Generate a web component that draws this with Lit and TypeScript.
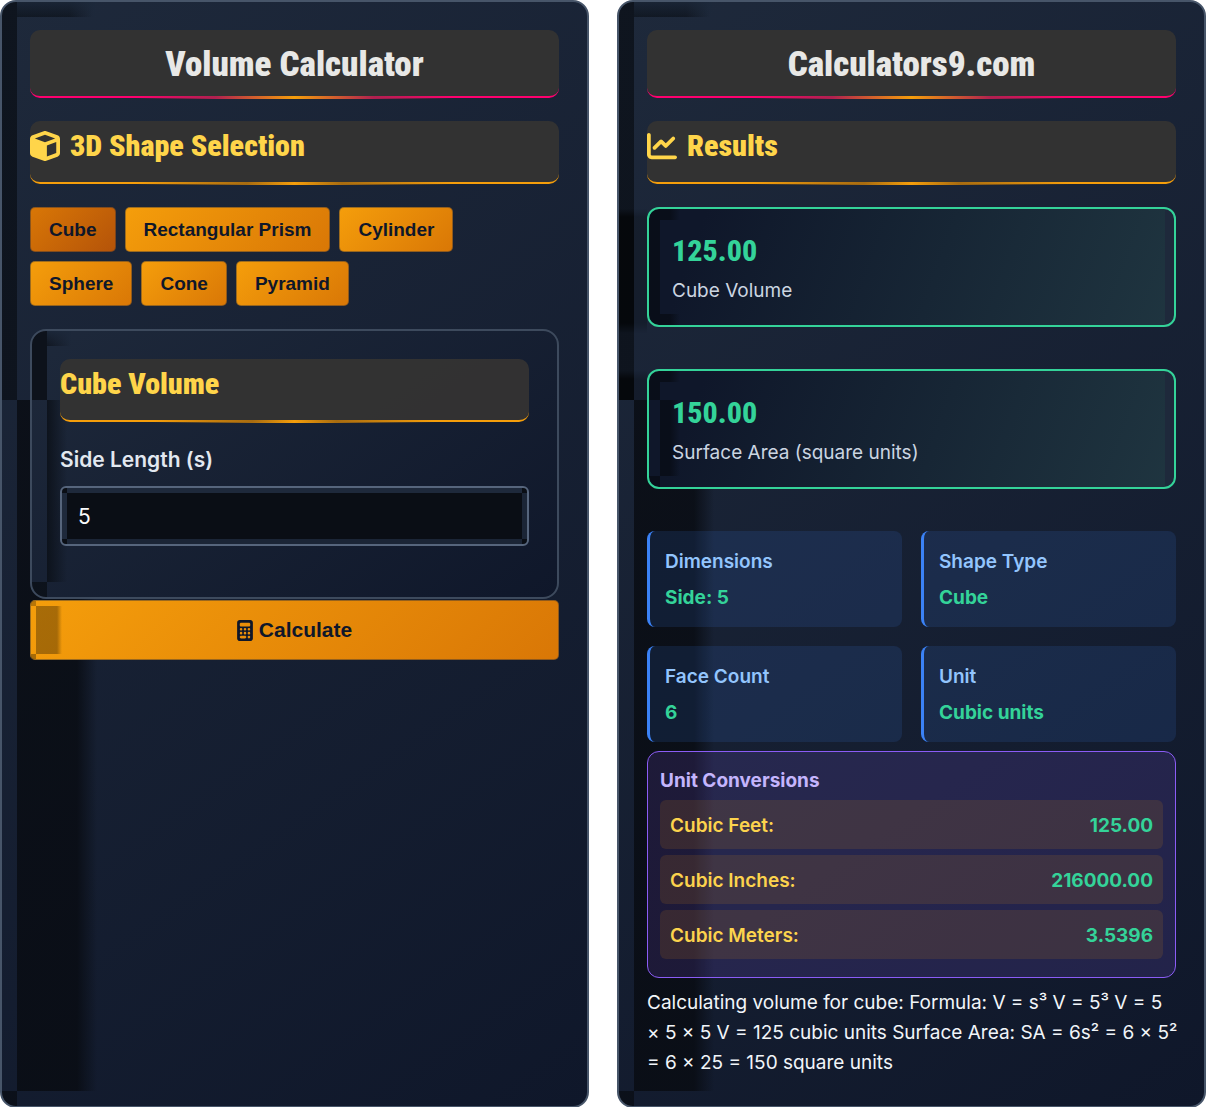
import { LitElement, html, css, svg } from "lit";
import { customElement, state } from "lit/decorators.js";
import { classMap } from "lit/directives/class-map.js";

const SHAPES = ["Cube", "Rectangular Prism", "Cylinder", "Sphere", "Cone", "Pyramid"];

const cubeIcon = svg`<path d="M234.5 5.7c13.9-5 29.1-5 43.1 0l192 68.6C495 83.4 512 107.5 512 134.6V377.4c0 27-17 51.2-42.5 60.3l-192 68.6c-13.9 5-29.1 5-43.1 0l-192-68.6C17 428.6 0 404.5 0 377.4V134.6c0-27 17-51.2 42.5-60.3l192-68.6zM256 66L82.3 128 256 190l173.7-62L256 66zm32 368.6l160-57.1v-188L288 246.6v188z"/>`;
const chartIcon = svg`<path d="M64 64c0-17.7-14.3-32-32-32S0 46.3 0 64V400c0 44.2 35.8 80 80 80H480c17.7 0 32-14.3 32-32s-14.3-32-32-32H80c-8.8 0-16-7.2-16-16V64zm406.6 86.6c12.5-12.5 12.5-32.8 0-45.3s-32.8-12.5-45.3 0L320 210.7l-57.4-57.4c-12.5-12.5-32.8-12.5-45.3 0l-112 112c-12.5 12.5-12.5 32.8 0 45.3s32.8 12.5 45.3 0L240 221.3l57.4 57.4c12.5 12.5 32.8 12.5 45.3 0l128-128z"/>`;
const calcIcon = svg`<path d="M64 0C28.7 0 0 28.7 0 64V448c0 35.3 28.7 64 64 64H320c35.3 0 64-28.7 64-64V64c0-35.3-28.7-64-64-64H64zM96 64H288c17.7 0 32 14.3 32 32v32c0 17.7-14.3 32-32 32H96c-17.7 0-32-14.3-32-32V96c0-17.7 14.3-32 32-32zm32 160a32 32 0 1 1 -64 0 32 32 0 1 1 64 0zM96 352a32 32 0 1 1 0-64 32 32 0 1 1 0 64zM64 416c0-17.7 14.3-32 32-32h96c17.7 0 32 14.3 32 32s-14.3 32-32 32H96c-17.7 0-32-14.3-32-32zM192 256a32 32 0 1 1 0-64 32 32 0 1 1 0 64zm32 64a32 32 0 1 1 -64 0 32 32 0 1 1 64 0zm64-64a32 32 0 1 1 0-64 32 32 0 1 1 0 64zm32 64a32 32 0 1 1 -64 0 32 32 0 1 1 64 0zM288 448a32 32 0 1 1 0-64 32 32 0 1 1 0 64z"/>`;

@customElement("app-root")
export class AppRoot extends LitElement {
  @state() private shape = "Cube";
  @state() private entry = "5";
  @state() private side = 5;

  static styles = css`
    :host {
      display: block;
      background: #fff;
      color: #e2e8f0;
      font: 400 19px/30px Inter, "Liberation Sans", sans-serif;
    }
    *,
    *::before,
    *::after {
      box-sizing: border-box;
    }
    h1, h2, h3, p, dl, dd, dt {
      margin: 0;
    }
    .page {
      display: grid;
      grid-template-columns: 1fr 1fr;
      gap: 28px;
    }
    .panel {
      min-width: 0;
      padding: 28px;
      border: 2px solid #475569;
      border-radius: 16px;
      /* broken shading down the left edge, switching sides 400px down */
      background:
        linear-gradient(90deg, #0b1018cc, #0b1018cc) 0 0 / 15px 398px no-repeat,
        linear-gradient(180deg, #1c283acc, #1c283a1a) 15px 0 / 78px 15px no-repeat,
        linear-gradient(90deg, #0b1018bb, #0b1018bb 52px, #0b101800 76px) 15px 0 / 78px 15px no-repeat,
        linear-gradient(90deg, #080b11cc, #080b11cc 60px, #080b1100 80px) 15px 398px / 80px calc(100% - 413px) no-repeat,
        linear-gradient(#080b11b3, #080b11b3) 0 100% / 15px 15px no-repeat,
        linear-gradient(145deg, #1e293b, #0f172a) border-box;
    }
    .title,
    .subtitle {
      position: relative;
      font-family: "Roboto Condensed", Roboto, sans-serif;
      font-weight: 900;
      background: rgba(52, 51, 50, 0.94);
      border-radius: 10px;
      border-bottom: 2px solid #f59e0b;
      margin-bottom: 23px;
    }
    .title {
      padding: 13px 0 10px;
      border-bottom-color: #ff006e;
      color: #e8e8e6;
      font-size: 35px;
      line-height: 43px;
      text-align: center;
    }
    .subtitle {
      display: flex;
      align-items: center;
      gap: 10px;
      padding: 5px 0 16px;
      color: #ffd54a;
      font-size: 30px;
      line-height: 40px;
    }
    .title::after,
    .subtitle::after {
      content: "";
      position: absolute;
      left: 20%;
      right: 20%;
      bottom: -3px;
      height: 3px;
      background: linear-gradient(90deg, #a86c1000, #a86c10 35%, #f59e0b 50%, #a86c10 65%, #a86c1000);
    }
    .title::after {
      background: linear-gradient(90deg, #b0204f00, #b0204f 25%, #f59e0b 50%, #b0204f 75%, #b0204f00);
    }
    .subtitle svg {
      width: 30px;
      height: 30px;
      fill: currentColor;
    }
    .shapes {
      display: flex;
      flex-wrap: wrap;
      gap: 9px;
      margin-bottom: 23px;
    }
    button {
      border: 1px solid #1e293b66;
      border-radius: 5px;
      color: #0f172a;
      background: linear-gradient(135deg, #f59e0b, #d97706) border-box;
      font: 700 19px/22px "Liberation Sans", sans-serif;
      cursor: pointer;
    }
    .shape {
      padding: 11px 18px 10px;
    }
    .shape.active {
      background: linear-gradient(135deg, #d97706, #b45309) border-box;
    }
    .form {
      padding: 28px;
      border: 2px solid #3d4a5d;
      border-radius: 16px;
      background:
        linear-gradient(#0d121b, #0d121b) 0 0 / 15px 69px no-repeat,
        linear-gradient(180deg, #1c283aee, #1c283a1a) 15px 0 / 24px 15px no-repeat,
        linear-gradient(90deg, #0d121bdd, #0d121b00) 15px 0 / 24px 15px no-repeat,
        linear-gradient(90deg, #0b1018dd, #0b101800) 15px 69px / 20px calc(100% - 84px) no-repeat,
        linear-gradient(#0b1018dd, #0b1018dd) 0 100% / 15px 15px no-repeat,
        linear-gradient(145deg, #1e293b, #0f172a) border-box;
    }
    .label {
      display: block;
      margin-bottom: 11px;
      font-size: 21px;
      line-height: 30px;
      font-weight: 600;
    }
    .field {
      display: block;
      width: 100%;
      height: 60px;
      margin-bottom: 23px;
      padding: 0 16px;
      border: 2px solid #56657c;
      border-radius: 6px;
      color: #f8fafc;
      font: 400 21px/30px Inter, sans-serif;
      background:
        linear-gradient(#1e293b, #1e293b) 50% 0 / calc(100% - 10px) 5px no-repeat,
        linear-gradient(#1b2536, #1b2536) 50% 100% / calc(100% - 10px) 5px no-repeat,
        linear-gradient(#1e293b, #1e293b) 0 50% / 5px calc(100% - 10px) no-repeat,
        linear-gradient(#1b2536, #1b2536) 100% 50% / 5px calc(100% - 10px) no-repeat,
        #0a0e15;
    }
    .calculate {
      display: flex;
      width: 100%;
      align-items: center;
      justify-content: center;
      gap: 6px;
      margin-top: 1px;
      padding: 17px;
      font-size: 21px;
      line-height: 24px;
      background:
        linear-gradient(90deg, #00000050, #00000050 21px, #00000000 26px) 5px 5px / 26px calc(100% - 10px) no-repeat,
        linear-gradient(#00000040, #00000040) 0 0 / 5px 5px no-repeat,
        linear-gradient(#00000050, #00000050) 0 100% / 5px 5px no-repeat,
        linear-gradient(135deg, #f59e0b, #d97706) border-box;
    }
    .calculate svg {
      width: 16px;
      height: 21px;
      fill: currentColor;
    }
    .result {
      position: relative;
      margin-bottom: 42px;
      padding: 22px 23px 19px;
      border: 2px solid #34d399;
      border-radius: 12px;
      background:
        linear-gradient(#05080e99, #05080e99) 0 0 / 11px 100% no-repeat,
        linear-gradient(90deg, #05080e99, #05080e99 10px, #05080e00 20px) 11px 0 / 20px 11px no-repeat,
        linear-gradient(90deg, #05080e99, #05080e99 10px, #05080e00 20px) 11px 100% / 20px 11px no-repeat,
        linear-gradient(#1e293b, #1e293b) 100% 0 / 9px 100% no-repeat,
        linear-gradient(110deg, #0f172a 10%, #1f3540 100%);
    }
    .result.lower {
      background:
        linear-gradient(#05080e99, #05080e99) 0 0 / 11px 29px no-repeat,
        linear-gradient(90deg, #05080e99, #05080e99 10px, #05080e00 20px) 11px 0 / 20px 11px no-repeat,
        linear-gradient(90deg, #05080e99, #05080e99 10px, #05080e00 20px) 11px 29px / 20px calc(100% - 40px) no-repeat,
        linear-gradient(#05080e99, #05080e99) 0 100% / 11px 11px no-repeat,
        linear-gradient(#1e293b, #1e293b) 100% 0 / 9px 100% no-repeat,
        linear-gradient(110deg, #0f172a 10%, #1f3540 100%);
    }
    /* shade cast by a result card onto the panel margin */
    .result::before {
      content: "";
      position: absolute;
      z-index: 0;
      left: -30px;
      top: 0;
      width: 28px;
      height: 124px;
      background: linear-gradient(90deg, #00000099 15px, #00000033 15px);
      mask-image: linear-gradient(transparent, #000 8px, #000 114px, transparent);
    }
    .result.lower::before {
      height: 29px;
      mask-image: linear-gradient(transparent, #000 8px);
    }
    .amount {
      color: #34d399;
      font: 800 30px/40px "Roboto Condensed", Roboto, sans-serif;
    }
    .caption {
      margin-top: 5px;
      color: #cbd5e1;
    }
    .facts {
      display: grid;
      grid-template-columns: 1fr 1fr;
      gap: 19px;
      margin-bottom: 9px;
    }
    .fact {
      padding: 16px 15px 14px;
      border-left: 3px solid #3b82f6;
      border-radius: 8px;
      background: rgba(59, 130, 246, 0.13);
      font-weight: 600;
    }
    .fact dt {
      margin-bottom: 6px;
      color: #93c5fd;
    }
    .fact dd {
      color: #34d399;
      font-weight: 700;
    }
    .units {
      padding: 14px 12px 18px;
      border: 1px solid #8b5cf6;
      border-radius: 12px;
      background: rgba(139, 92, 246, 0.15);
    }
    .units h3 {
      margin-bottom: 4px;
      color: #c4b5fd;
      font-size: 19px;
      font-weight: 700;
    }
    .conversions {
      display: grid;
      gap: 6px;
    }
    .row {
      display: flex;
      justify-content: space-between;
      padding: 11px 10px 8px;
      border-radius: 6px;
      background: rgba(245, 158, 11, 0.12);
      color: #fcd34d;
      font-weight: 600;
    }
    .row dd {
      color: #34d399;
      font-weight: 700;
    }
    .steps {
      margin: 10px -4px 0 0;
      color: #f1f5f9;
    }
  `;

  private calculate() {
    const n = Number(this.entry);
    if (n > 0) this.side = n;
  }

  render() {
    const s = this.side;
    const volume = s ** 3;
    const area = 6 * s * s;
    const facts = [
      ["Dimensions", `Side: ${s}`],
      ["Shape Type", "Cube"],
      ["Face Count", "6"],
      ["Unit", "Cubic units"],
    ];
    const conversions = [
      ["Cubic Feet:", volume.toFixed(2)],
      ["Cubic Inches:", (volume * 1728).toFixed(2)],
      ["Cubic Meters:", (volume * 0.0283168).toFixed(4)],
    ];
    // operators stay on the same line as the operand that follows them
    const steps =
      `Calculating volume for cube: Formula: V = s³ V = ${s}³ V = ${s} ×\u00a0${s} ×\u00a0${s} V = ${volume} cubic units ` +
      `Surface Area: SA = 6s² = 6 ×\u00a0${s}² =\u00a06 ×\u00a0${s * s} = ${area} square units`;
    return html`
      <main class="page">
        <section class="panel">
          <h1 class="title">Volume Calculator</h1>
          <h2 class="subtitle">
            <svg viewBox="0 0 512 512" aria-hidden="true">${cubeIcon}</svg>3D Shape Selection
          </h2>
          <div class="shapes">
            ${SHAPES.map(
              (name) => html`<button
                type="button"
                class=${classMap({ shape: true, active: name === this.shape })}
                @click=${() => (this.shape = name)}
              >${name}</button>`
            )}
          </div>
          <div class="form">
            <h2 class="subtitle">Cube Volume</h2>
            <label class="label" for="side">Side Length (s)</label>
            <input
              class="field"
              id="side"
              type="text"
              inputmode="decimal"
              .value=${this.entry}
              @input=${(e: Event) => (this.entry = (e.target as HTMLInputElement).value)}
            />
          </div>
          <button type="button" class="calculate" @click=${this.calculate}>
            <svg viewBox="0 0 384 512" aria-hidden="true">${calcIcon}</svg>Calculate
          </button>
        </section>
        <section class="panel">
          <h1 class="title">Calculators9.com</h1>
          <h2 class="subtitle">
            <svg viewBox="0 0 512 512" aria-hidden="true">${chartIcon}</svg>Results
          </h2>
          <div class="result">
            <p class="amount">${volume.toFixed(2)}</p>
            <p class="caption">Cube Volume</p>
          </div>
          <div class="result lower">
            <p class="amount">${area.toFixed(2)}</p>
            <p class="caption">Surface Area (square units)</p>
          </div>
          <dl class="facts">
            ${facts.map(([k, v]) => html`<div class="fact"><dt>${k}</dt><dd>${v}</dd></div>`)}
          </dl>
          <div class="units">
            <h3>Unit Conversions</h3>
            <dl class="conversions">
              ${conversions.map(([k, v]) => html`<div class="row"><dt>${k}</dt><dd>${v}</dd></div>`)}
            </dl>
          </div>
          <p class="steps">${steps}</p>
        </section>
      </main>
    `;
  }
}
